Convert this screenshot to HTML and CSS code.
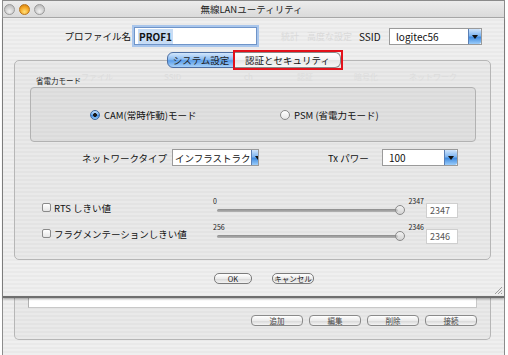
FILE: index.html
```html
<!DOCTYPE html>
<html lang="ja">
<head>
<meta charset="utf-8">
<title>無線LANユーティリティ</title>
<link rel="stylesheet" href="styles.css">
</head>
<body>
<div class="window">
  <div class="titlebar">
    <div class="lights"><span class="light gray"></span><span class="light orange"></span><span class="light gray"></span></div>
    <div class="title">無線LANユーティリティ</div>
    <div></div>
  </div>

  <div class="sheet">
    <div class="row1">
      <span class="lbl-profile">プロファイル名</span>
      <div class="field focus"><span class="sel">PROF1</span></div>
      <span class="ghost g-stat">統計</span>
      <span class="ghost g-adv">高度な設定</span>
      <span class="ssid-lbl">SSID</span>
      <div class="popup ssid"><span class="ptext">logitec56</span><span class="arrow"></span></div>
    </div>

    <div class="tabs">
      <div class="tab active">システム設定</div>
      <div class="tab marked">認証とセキュリティ</div>
    </div>

    <div class="tabbox">
      <div class="ghost-head">
        <span class="gh gh1">ファイル</span>
        <span class="gh gh2">SSID</span>
        <span class="gh gh3">ch</span>
        <span class="gh gh4">認証</span>
        <span class="gh gh5">暗号化</span>
        <span class="gh gh6">ネットワーク</span>
      </div>
      <div class="power-label">省電力モード</div>
      <div class="powerbox">
        <div class="radio-item cam"><span class="radio on"></span><span>CAM(常時作動)モード</span></div>
        <div class="radio-item"><span class="radio"></span><span>PSM (省電力モード)</span></div>
      </div>

      <div class="netrow">
        <span class="net-lbl">ネットワークタイプ</span>
        <div class="popup net"><span class="ptext">インフラストラク</span><span class="arrow"></span></div>
        <span class="tx-lbl">Tx パワー</span>
        <div class="popup tx"><span class="ptext">100</span><span class="arrow"></span></div>
      </div>

      <div class="srow first">
        <div class="chk-item"><span class="chk"></span><span>RTS しきい値</span></div>
        <div class="slider">
          <div class="slabels"><span>0</span><span>2347</span></div>
          <div class="strack"><span class="track"></span><span class="thumb"></span></div>
        </div>
        <div class="numfield">2347</div>
      </div>
      <div class="srow">
        <div class="chk-item"><span class="chk"></span><span>フラグメンテーションしきい値</span></div>
        <div class="slider">
          <div class="slabels"><span>256</span><span>2346</span></div>
          <div class="strack"><span class="track"></span><span class="thumb"></span></div>
        </div>
        <div class="numfield">2346</div>
      </div>
    </div>

    <div class="actions">
      <button class="btn ok">OK</button>
      <button class="btn cancel">キャンセル</button>
    </div>

    <svg class="grip" width="8" height="8" viewBox="0 0 8 8">
      <path d="M1 8 L8 1 M4 8 L8 4 M7 8 L8 7" stroke="#8a8a8a" stroke-width="0.8" fill="none"/>
    </svg>
  </div>

  <div class="under">
    <div class="ubox">
      <div class="list"></div>
      <div class="ubtns">
        <button class="btn ub">追加</button>
        <button class="btn ub">編集</button>
        <button class="btn ub">削除</button>
        <button class="btn ub">接続</button>
      </div>
    </div>
  </div>
</div>
</body>
</html>
```

FILE: styles.css
```css
* { box-sizing: border-box; }
html, body { margin: 0; padding: 0; }
body {
  background: #ffffff;
  font-family: "Noto Sans CJK JP", "Noto Sans", sans-serif;
  font-size: 9.5px;
  color: #111;
  width: 508px;
  height: 355px;
  overflow: hidden;
}

.window {
  margin-left: 2px;
  width: 503px;
  height: 355px;
  border-left: 1px solid #8c8c8c;
  border-right: 1px solid #8c8c8c;
  border-top: 1px solid #8a8a8a;
  background: repeating-linear-gradient(#efefef 0 2px, #e9e9e9 2px 4px);
  display: flex;
  flex-direction: column;
}

/* title bar */
.titlebar {
  height: 17px;
  flex: none;
  display: grid;
  grid-template-columns: 1fr auto 1fr;
  align-items: center;
  background: linear-gradient(#ececec, #dadada);
  border-bottom: 1px solid #ababab;
}
.lights { display: flex; gap: 4px; padding-left: 1px; }
.light {
  width: 11px; height: 11px; border-radius: 50%;
  border: 1px solid #9a9a9a;
}
.light.gray { background: radial-gradient(circle at 50% 70%, #f2f2f2, #c4c4c4 70%, #b0b0b0); }
.light.orange {
  border-color: #b8741a;
  background: radial-gradient(circle at 50% 75%, #ffe07a, #f5a623 55%, #c8780e);
}
.title { font-size: 9.5px; color: #222; padding-right: 4px; }

/* sheet */
.sheet {
  position: relative;
  z-index: 1;
  height: 280px;
  flex: none;
  border-bottom: 2px solid #6e6e6e;
  box-shadow: 0 1px 2px rgba(0,0,0,0.35);
  display: flex;
  flex-direction: column;
}

.row1 {
  margin-top: 9px;
  height: 18px;
  display: flex;
  align-items: center;
}
.lbl-profile { width: 128px; text-align: right; margin-right: 3px; font-size: 9.5px; }
.field {
  width: 123px; height: 18px;
  background: #fff;
  border: 1px solid #8e8e8e;
  display: flex; align-items: center;
  padding-left: 3px;
}
.field.focus { box-shadow: 0 0 0 2px #a9c6ec; border-color: #6f94c8; }
.sel { background: #c7dcf5; padding: 0 1px; font-size: 10px; font-weight: bold; color: #111; }
.ghost { color: #d9d9d9; font-size: 9px; }
.g-stat { width: 20px; margin-left: 24px; }
.g-adv { width: 47px; margin-left: 6px; }
.ssid-lbl { width: 30px; margin-left: 5px; font-size: 10px; }

.popup {
  height: 17px;
  background: #fff;
  border: 1px solid #9a9a9a;
  display: flex;
  align-items: center;
  overflow: hidden;
}
.ptext { flex: 1; padding-left: 6px; white-space: nowrap; font-size: 10px; }
.arrow {
  flex: none;
  width: 13px; height: 15px;
  border-left: 1px solid #5a7fb5;
  border-radius: 0 2px 2px 0;
  background: linear-gradient(#cfe4fb, #7db4f0 45%, #3f8be0 55%, #9ccdfa);
  position: relative;
}
.arrow::after {
  content: "";
  position: absolute;
  left: 3px; top: 6px;
  border-left: 3.5px solid transparent;
  border-right: 3.5px solid transparent;
  border-top: 4px solid #111;
}
.popup.ssid { width: 93px; }

/* tabs */
.tabs {
  margin-top: 7px;
  height: 16px;
  margin-bottom: -8px;
  display: flex;
  justify-content: center;
  position: relative;
  z-index: 2;
  padding-left: 1px;
}
.tab {
  height: 16px;
  display: flex; align-items: center; justify-content: center;
  font-size: 9.5px;
  border: 1px solid #8a8a8a;
}
.tab.active {
  width: 68px;
  border-radius: 6px 0 0 6px;
  border-color: #4d6fa3;
  background: linear-gradient(#d3e7fc, #8dbdf2 45%, #5c9ee8 55%, #a6d1fa);
  color: #1b1b1b;
}
.tab.marked {
  position: relative;
  width: 106px;
  border-left: none;
  border-radius: 0 6px 6px 0;
  background: linear-gradient(#ffffff, #f3f3f3 50%, #e4e4e4 51%, #f7f7f7);
}
.tab.marked::after {
  content: "";
  position: absolute;
  left: -2px; right: -3px; top: -3px; bottom: -3px;
  border: 2px solid #e3121b;
}

/* tab content box */
.tabbox {
  position: relative;
  margin: 0 13px 0 11px;
  height: 200px;
  flex: none;
  border: 1px solid #b6b6b6;
  border-radius: 5px;
  background: rgba(0,0,0,0.025);
}
.ghost-head {
  position: absolute;
  left: 0; top: 10px;
  width: 100%;
  height: 10px;
  font-size: 8px;
  color: #dcdcdc;
}
.gh { position: absolute; top: 0; }
.gh1 { left: 66px; }
.gh2 { left: 149px; }
.gh3 { left: 229px; }
.gh4 { left: 282px; }
.gh5 { left: 339px; }
.gh6 { left: 394px; }

.power-label {
  position: relative;
  margin-top: 14px;
  height: 11px;
  padding-left: 21px;
  font-size: 7.5px;
  line-height: 11px;
  color: #222;
}
.powerbox {
  margin: 1px 14px 0 15px;
  height: 55px;
  border: 1px solid #b2b2b2;
  border-radius: 4px;
  background: rgba(0,0,0,0.035);
  display: flex;
  align-items: center;
  padding-left: 59px;
  padding-top: 1px;
}
.radio-item { display: flex; align-items: center; gap: 4px; font-size: 9.5px; }
.radio-item.cam { width: 190px; }
.radio {
  width: 10px; height: 10px; border-radius: 50%;
  border: 1px solid #8a8a8a;
  background: linear-gradient(#ffffff, #e6e6e6);
}
.radio.on {
  border-color: #3b679f;
  background: radial-gradient(circle, #1a1a1a 0 1.6px, transparent 2.2px), linear-gradient(#c6e0fa, #6aa9ee 50%, #3e88de 55%, #9ccbf8);
}

.netrow {
  margin-top: 7px;
  height: 17px;
  display: flex;
  align-items: center;
  padding-left: 67px;
}
.net-lbl { width: 90px; }
.popup.net { width: 87px; }
.popup.net .ptext { padding-left: 2px; font-size: 9.5px; }
.tx-lbl { width: 54px; margin-left: 69px; font-size: 9.5px; }
.popup.tx { width: 76px; }

.srow {
  height: 22px;
  display: grid;
  grid-template-columns: 166px 214px 32px;
  column-gap: 2px;
  padding-left: 27px;
}
.srow.first { margin-top: 31px; }
.srow + .srow { margin-top: 4px; }
.chk-item { display: flex; align-items: center; gap: 3px; align-self: center; font-size: 9.5px; margin-top: -1px; }
.chk {
  width: 9px; height: 9px;
  border: 1px solid #8a8a8a;
  border-radius: 2px;
  background: linear-gradient(#ffffff, #e6e6e6);
}
.slider { display: flex; flex-direction: column; }
.slabels {
  height: 8px;
  display: flex;
  justify-content: space-between;
  padding: 0 0 0 3px;
  font-size: 7px;
  line-height: 8px;
  color: #222;
}
.strack {
  height: 10px;
  display: flex;
  align-items: center;
  padding-left: 7px;
}
.track {
  width: 181px; height: 3px;
  border-radius: 2px;
  background: linear-gradient(#8c8c8c, #b4b4b4);
}
.thumb {
  width: 10px; height: 10px;
  margin-left: -3px;
  border-radius: 50%;
  border: 1px solid #8a8a8a;
  background: linear-gradient(rgba(250,250,250,0.6), rgba(200,200,200,0.6));
}
.numfield {
  align-self: end;
  margin-bottom: 1px;
  height: 15px;
  background: #fff;
  border: 1px solid #cfcfcf;
  font-size: 9px;
  line-height: 13px;
  padding-left: 3px;
  color: #555;
}

/* action buttons */
.actions {
  margin-top: 13px;
  display: flex;
  gap: 20px;
  padding-left: 211px;
}
.btn {
  margin: 0;
  padding: 0;
  height: 11px;
  border: 1px solid #7c7c7c;
  border-radius: 5px;
  background: linear-gradient(#ffffff, #ececec 50%, #d8d8d8 55%, #f4f4f4);
  font-family: "Noto Sans CJK JP", "Noto Sans", sans-serif;
  font-size: 7.5px;
  line-height: 9px;
  color: #222;
}
.btn.ok { width: 38px; }
.btn.cancel { width: 42px; }

.grip { position: absolute; right: 2px; bottom: 2px; }

/* underlying window */
.under {
  flex: 1;
  padding: 0 13px 0 11px;
}
.ubox {
  height: 42px;
  border: 1px solid #b6b6b6;
  border-top: none;
  border-radius: 0 0 5px 5px;
  background: rgba(0,0,0,0.025);
}
.list {
  margin-left: 13px;
  width: 449px;
  height: 10px;
  background: #fff;
  border-left: 1px solid #b0b0b0;
  border-right: 1px solid #c8c8c8;
  border-bottom: 1px solid #c8c8c8;
}
.ubtns {
  margin-top: 7px;
  display: flex;
  justify-content: flex-end;
  gap: 6px;
  padding-right: 13px;
}
.btn.ub {
  width: 52px;
  border-radius: 4px;
  border-color: #8a8a8a;
  color: #444;
}
```
